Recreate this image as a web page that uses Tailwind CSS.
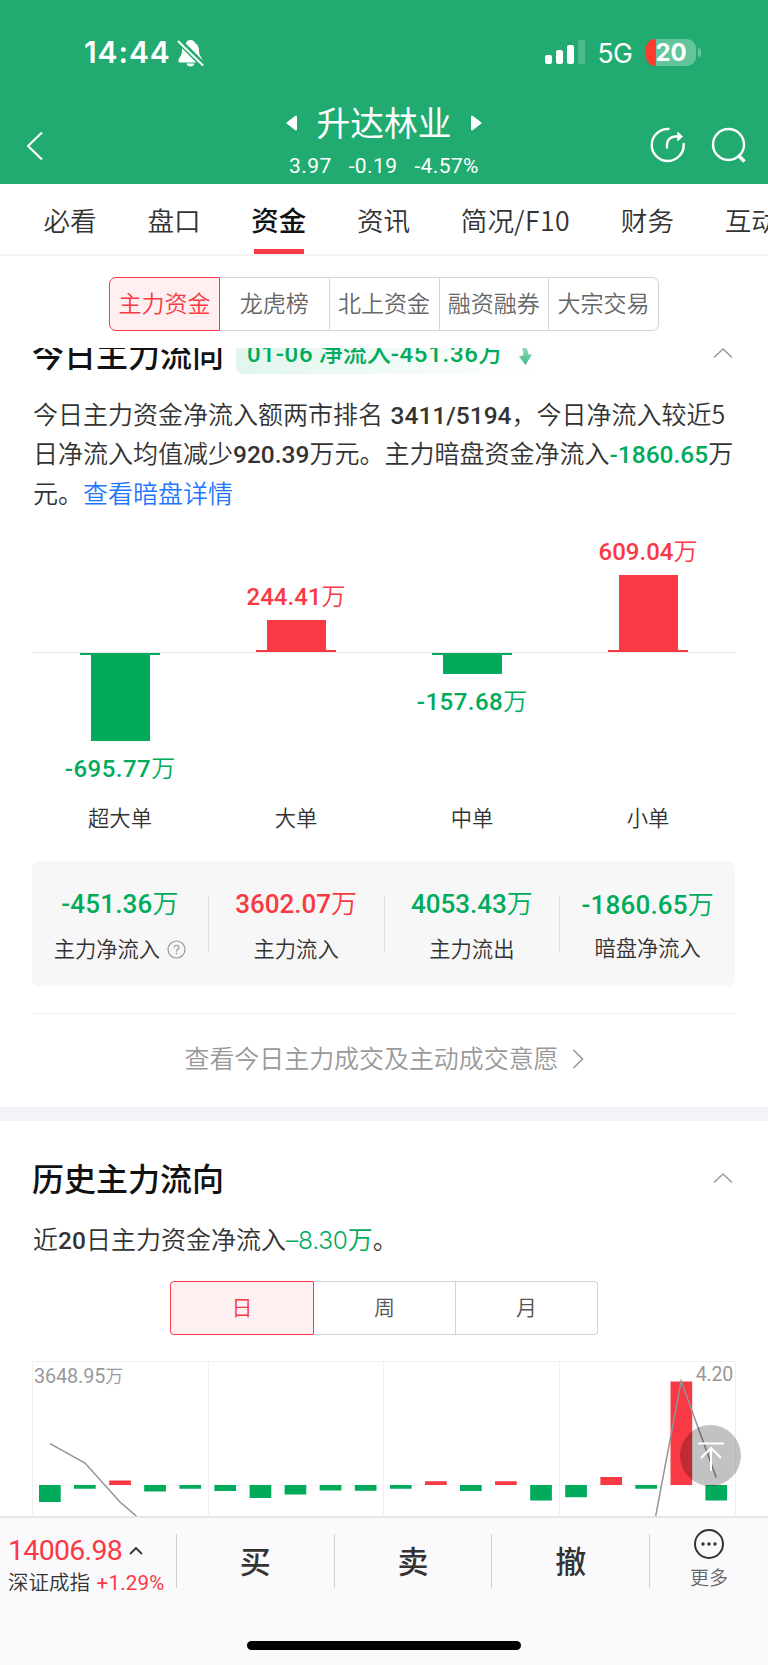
<!DOCTYPE html>
<html lang="zh-CN">
<head>
<meta charset="utf-8">
<title>升达林业</title>
<script src="https://cdn.jsdelivr.net/npm/@tailwindcss/browser@4"></script>
</head>
<body class="bg-white">
<div class="relative flex h-[1665px] w-[768px] flex-col overflow-hidden whitespace-nowrap bg-white font-['Noto_Sans_CJK_SC',sans-serif] text-[#333]">

  <!-- header -->
  <header class="flex h-[184px] shrink-0 flex-col bg-[#21ab70] text-white">
    <div class="flex h-[104px] items-center pl-[84px] pr-[67px]">
      <span class="font-['Inter',sans-serif] text-[30px] font-semibold leading-none tracking-[0.9px]">14:44</span>
      <svg class="ml-[6px] mt-[1px]" width="27" height="28" viewBox="0 0 27 28">
        <path d="M13.500 1c-2.300 0-4 1.200-4.500 3C6.200 5.500 5 8 5 11.500c0 6-3.500 7-3.500 10.500 0 1 .5 1.500 1.500 1.500h21c1 0 1.500-.5 1.500-1.500 0-3.500-3.500-4.500-3.500-10.500 0-3.500-1.200-6-4-7.500-.5-1.800-2.200-3-4.500-3zM9.500 24.500h8c-.4 1.800-1.900 3-4 3s-3.600-1.200-4-3z" fill="#fff"/>
        <path d="M1 1l26 26" stroke="#21ab70" stroke-width="6"/>
        <path d="M1.500 2.500l24 23.500" stroke="#fff" stroke-width="2" stroke-linecap="round"/>
      </svg>
      <div class="ml-auto flex items-end gap-1">
        <span class="h-[9.500px] w-[7px] rounded-[2px] bg-white"></span>
        <span class="h-[14px] w-[7px] rounded-[2px] bg-white"></span>
        <span class="h-[19px] w-[7px] rounded-[2px] bg-white"></span>
        <span class="h-[24.500px] w-[7px] rounded-[2px] bg-white/20"></span>
      </div>
      <span class="ml-[12px] mt-[2px] font-['Inter',sans-serif] text-[26.500px] leading-none tracking-[-0.4px]">5G</span>
      <div class="ml-[13px] flex h-[27px] w-[50.500px] items-center rounded-[9px] bg-linear-to-r from-[#ff3b30] from-[10px] to-[#64c49b] to-[10px] pl-[10px]">
        <span class="font-['Inter',sans-serif] text-[24px] font-bold leading-[27px]">20</span>
      </div>
      <span class="ml-[2px] h-[9px] w-[3px] rounded-r-full bg-white/30"></span>
    </div>
    <div class="flex h-[80px] items-center pl-[26px] pr-[22px]">
      <svg class="mt-[3px]" width="18" height="30" viewBox="0 0 18 30" fill="none" stroke="#fff" stroke-width="2.300"><path d="M16 1.500L2 15l14 13.500" stroke-linejoin="round"/></svg>
      <div class="ml-[243px] flex h-full w-[194px] flex-col items-center">
        <div class="flex h-[38px] items-center gap-[18px]">
          <svg width="12" height="16" viewBox="0 0 12 16"><path d="M10 1.500v13L1.500 8z" fill="#fff" stroke="#fff" stroke-width="2" stroke-linejoin="round"/></svg>
          <span class="mt-[-3px] text-[33.800px] leading-[38px]">升达林业</span>
          <svg width="12" height="16" viewBox="0 0 12 16"><path d="M2 1.500v13L10.500 8z" fill="#fff" stroke="#fff" stroke-width="2" stroke-linejoin="round"/></svg>
        </div>
        <div class="mt-[13px] flex gap-[17px] font-['Roboto',sans-serif] text-[21px] leading-[22px] tracking-[0.4px]"><span>3.97</span><span>-0.19</span><span>-4.57%</span></div>
      </div>
      <svg class="ml-auto mt-[2px]" width="36" height="36" viewBox="0 0 36 36" fill="none" stroke="#fff" stroke-width="2.400" stroke-linecap="round">
        <path d="M18.500 2A16 16 0 1 0 33.700 17"/><path d="M17 20.500V18q0-7.500 8-8.500h5"/><path d="M28 5.500l4.500 4-4.500 4z" fill="#fff" stroke-width="1" stroke-linejoin="round"/>
      </svg>
      <svg class="ml-[24px] mt-[2px]" width="36" height="36" viewBox="0 0 36 36" fill="none" stroke="#fff" stroke-width="2.400"><circle cx="18.500" cy="17.500" r="15.500"/><path d="M28 28l6.500 6.500" stroke-width="3.500"/></svg>
    </div>
  </header>

  <!-- page tabs -->
  <nav class="flex h-[72px] shrink-0 gap-[50.700px] border-b-2 border-[#f3f3f4] pl-[43.500px] text-[26.600px] font-[350] leading-[71px]">
    <span>必看</span><span>盘口</span>
    <span class="flex flex-col items-center text-[27.500px] font-medium text-[#111]"><span class="h-[65px]">资金</span><span class="h-[5px] w-[50px] bg-[#f93943]"></span></span>
    <span>资讯</span><span>简况<span class="tracking-[0.5px]">/F10</span></span><span>财务</span><span>互动</span>
  </nav>

  <!-- fund type switch -->
  <div class="flex h-[92px] shrink-0 justify-center pt-[21px] text-[23px] font-[350] leading-[49px] text-[#666]">
    <div class="flex h-[54px] w-[550px] text-center">
      <span class="w-[111px] rounded-l-[7px] border border-[#f93943] bg-[#ffeff0] text-[#f93943]">主力资金</span>
      <span class="w-[109.500px] border-y border-r border-[#d5d5d7]">龙虎榜</span>
      <span class="w-[110px] border-y border-r border-[#d5d5d7]">北上资金</span>
      <span class="w-[109.500px] border-y border-r border-[#d5d5d7]">融资融券</span>
      <span class="w-[110px] rounded-r-[7px] border-y border-r border-[#d5d5d7]">大宗交易</span>
    </div>
  </div>

  <main class="flex h-[1168px] shrink-0 flex-col overflow-hidden">
    <!-- today -->
    <section class="flex h-[759px] shrink-0 flex-col px-8">
      <div class="-mt-[18px] flex h-[46px] shrink-0 items-center">
        <h2 class="text-[32px] font-medium leading-[46px] text-[#111]">今日主力流向</h2>
        <div class="ml-[12px] flex h-[42px] w-[306px] items-center rounded-[7px] bg-linear-to-r from-[#e2f6ed] to-white pl-[11px] text-[24px] font-medium leading-[42px] text-[#00ab5b]"><span><span class="font-['Roboto',sans-serif] tracking-[0.7px]">01-06</span> 净流入<span class="font-['Roboto',sans-serif] tracking-[0.7px]">-451.36</span>万</span>
          <svg class="ml-[15px] mt-[6px]" width="15" height="20" viewBox="0 0 15 20"><defs><linearGradient id="dn" x1="0" y1="0" x2="0" y2="1"><stop offset="0" stop-color="#9fdcbf"/><stop offset="1" stop-color="#3dbd82"/></linearGradient></defs><path d="M3 0h4q3 3 3.500 8.500H14L7.500 19 1 10.500l4-1Q6 5 3 0z" fill="url(#dn)"/></svg>
        </div>
        <svg class="ml-auto mr-[3px]" width="20" height="12" viewBox="0 0 20 12" fill="none" stroke="#999" stroke-width="1.500"><path d="M1 10.500L10 2l9 8.500"/></svg>
      </div>
      <div class="mt-[18px] h-[120px] shrink-0 pl-px text-[25px] font-[350] leading-[38px]">
        <p class="h-[39.400px]">今日主力资金净流入额两市排名 <span class="ml-[2px] font-['Roboto',sans-serif] text-[24.500px] font-medium">3411/5194</span>，今日净流入较近5</p>
        <p class="h-[39.400px]">日净流入均值减少<span class="font-['Roboto',sans-serif] text-[24.500px] font-medium">920.39</span>万元。主力暗盘资金净流入<span class="font-['Roboto',sans-serif] text-[24.500px] font-medium text-[#00ab5b]">-1860.65</span>万</p>
        <p class="h-[39.400px]">元。<span class="text-[#1f77ff]">查看暗盘详情</span></p>
      </div>

      <!-- order size chart: upper half, axis, lower half, labels -->
      <div class="mt-[16px] grid h-[122px] shrink-0 grid-cols-4 items-end text-center text-[24px] font-[350] leading-[38px] text-[#f93943]">
        <span></span>
        <div class="flex flex-col items-center"><span class="h-[38px]"><span class="font-['Roboto',sans-serif] font-medium">244.41</span>万</span><i class="mt-[6px] h-[30px] w-[59px] bg-[#f93943]"></i><i class="h-[2px] w-[80px] bg-[#f93943]"></i></div>
        <span></span>
        <div class="flex flex-col items-center"><span class="h-[38px]"><span class="font-['Roboto',sans-serif] font-medium">609.04</span>万</span><i class="mt-[6px] h-[75px] w-[59px] bg-[#f93943]"></i><i class="h-[2px] w-[80px] bg-[#f93943]"></i></div>
      </div>
      <div class="h-px shrink-0 bg-[#ececee]"></div>
      <div class="grid h-[146px] shrink-0 grid-cols-4 items-start text-center text-[24px] font-[350] leading-[38px] text-[#00ab5b]">
        <div class="flex flex-col items-center"><i class="h-[2px] w-[80px] bg-[#00ab5b]"></i><i class="mb-[7px] h-[86px] w-[59px] bg-[#00ab5b]"></i><span><span class="font-['Roboto',sans-serif] font-medium tracking-[0.5px]">-695.77</span>万</span></div>
        <span></span>
        <div class="flex flex-col items-center"><i class="h-[2px] w-[80px] bg-[#00ab5b]"></i><i class="mb-[7px] h-[19px] w-[59px] bg-[#00ab5b]"></i><span><span class="font-['Roboto',sans-serif] font-medium tracking-[0.5px]">-157.68</span>万</span></div>
        <span></span>
      </div>
      <div class="grid h-[62px] shrink-0 grid-cols-4 text-center text-[21.300px] font-[350] leading-[35px]"><span>超大单</span><span>大单</span><span>中单</span><span>小单</span></div>

      <!-- totals -->
      <div class="grid h-[125px] w-[703px] shrink-0 grid-cols-4 rounded-[7px] bg-[#f7f7f8] text-center text-[26px] font-[350] leading-[38px] text-[#00ab5b]">
        <div class="flex flex-col items-center pt-[22px]"><span class="h-[40px]"><span class="font-['Roboto',sans-serif] font-medium tracking-[0.2px]">-451.36</span>万</span>
          <span class="mt-[6px] flex h-[38px] items-center gap-[7px] text-[21.300px] leading-[36px] text-[#333]">主力净流入<svg class="mt-[2px]" width="19" height="19" viewBox="0 0 19 19" fill="none" stroke="#999" stroke-width="1.200"><circle cx="9.500" cy="9.500" r="8.500"/><path d="M7.200 7.600c0-3.200 4.800-3 4.800 0 0 1.700-2.500 1.800-2.500 3.800M9.500 12.800v1.500"/></svg></span></div>
        <div class="mt-[34px] flex h-[57px] flex-col items-center border-l border-[#dedee0]"><span class="-mt-[12px] h-[40px] shrink-0 text-[#f93943]"><span class="font-['Roboto',sans-serif] font-medium">3602.07</span>万</span><span class="mt-[6px] text-[21.300px] text-[#333]">主力流入</span></div>
        <div class="mt-[34px] flex h-[57px] flex-col items-center border-l border-[#dedee0]"><span class="-mt-[12px] h-[40px] shrink-0"><span class="font-['Roboto',sans-serif] font-medium">4053.43</span>万</span><span class="mt-[6px] text-[21.300px] text-[#333]">主力流出</span></div>
        <div class="mt-[34px] flex h-[57px] flex-col items-center border-l border-[#dedee0]"><span class="-mt-[11px] h-[40px] shrink-0"><span class="font-['Roboto',sans-serif] font-medium tracking-[0.2px]">-1860.65</span>万</span><span class="mt-[4px] text-[21.300px] text-[#333]">暗盘净流入</span></div>
      </div>
      <div class="mt-[27px] h-px shrink-0 bg-[#f0f0f1]"></div>
      <div class="flex h-[90px] items-center justify-center gap-[13px] text-[24.950px] font-[350] leading-[86px] text-[#999]"><span class="-mt-[4px]">查看今日主力成交及主动成交意愿</span><svg width="12" height="20" viewBox="0 0 12 20" fill="none" stroke="#999" stroke-width="1.600"><path d="M1.500 1L10.500 10l-9 9"/></svg></div>
    </section>
    <div class="h-[14px] shrink-0 bg-[#f2f4f8]"></div>

    <!-- history -->
    <section class="flex flex-col px-8">
      <div class="flex h-[113px] shrink-0 items-center">
        <h2 class="-mt-[2px] text-[32px] font-medium leading-[46px] text-[#111]">历史主力流向</h2>
        <svg class="ml-auto mr-[3px]" width="20" height="12" viewBox="0 0 20 12" fill="none" stroke="#999" stroke-width="1.500"><path d="M1 10.500L10 2l9 8.500"/></svg>
      </div>
      <p class="-mt-[14px] h-[61px] shrink-0 pl-px text-[25px] font-[350] leading-[36px]">近<span class="font-['Roboto',sans-serif] text-[24.500px] font-medium">20</span>日主力资金净流入<span class="text-[#00ab5b]"><span class="font-['Inter',sans-serif] text-[24.500px] tracking-[-0.2px]">–8.30</span>万</span>。</p>
      <div class="mx-auto flex h-[54px] w-[428px] shrink-0 text-center text-[21px] font-[350] leading-[49px] text-[#555]">
        <span class="w-[144px] rounded-l-[4px] border border-[#f93943] bg-[#fff1f2] text-[#f93943]">日</span>
        <span class="w-[142px] border-y border-r border-[#d5d5d7]">周</span>
        <span class="w-[142px] rounded-r-[4px] border-y border-r border-[#d5d5d7]">月</span>
      </div>
      <div class="relative mt-[26px] h-[156px] w-[704px] shrink-0">
        <svg class="absolute inset-0" width="704" height="156" viewBox="32 1361 704 156">
          <g fill="none" stroke="#f0f0f1"><path d="M32.500 1517V1361.500H735.500V1517M208.500 1361V1517M383.500 1361V1517M559.500 1361V1517"/><path d="M33 1485H735" stroke-dasharray="4 2"/></g>
          <g fill="#00ab5b">
            <path d="M39 1485h21.700v17H39zM74 1485h21.700v3.700H74zM144.200 1485h21.700v6.500h-21.700zM179.400 1485h21.700v3.700h-21.700zM214.400 1485h21.700v6h-21.700zM249.600 1485h21.700v13h-21.700zM284.600 1485h21.700v9.500h-21.700zM319.700 1485h21.700v5.500h-21.700zM354.800 1485h21.700v5.700h-21.700zM389.900 1485h21.700v3.700h-21.700zM460 1485h21.700v6h-21.700zM530.200 1485h21.700v15.500h-21.700zM565.200 1485h21.700v12.200h-21.700zM635.300 1485H657v3.700h-21.700zM705.400 1485h21.700v15.500h-21.700z"/>
          </g>
          <path fill="#f93943" d="M109.200 1480.600h21.700v4.400h-21.700zM425 1481.200h21.700v3.800H425zM495 1481.200h21.700v3.800H495zM600.400 1477h21.700v8h-21.700zM670.500 1381.500h21.700V1485h-21.700z"/>
          <path d="M50 1443.700L85 1463l35 39 18 15.500M655.500 1517L681.200 1381l35 96.500" fill="none" stroke="#949494" stroke-width="1.500"/>
        </svg>
        <div class="relative flex justify-between pl-[2px] pr-[3px] text-[18px] font-[350] leading-[28px] text-[#999]"><span><span class="font-['Roboto',sans-serif] text-[19.800px] font-normal tracking-[-0.1px]">3648.95</span>万</span><span class="font-['Roboto',sans-serif] text-[19.500px] font-normal tracking-[-0.2px]">4.20</span></div>
        <div class="absolute left-[648px] top-[64px] flex size-[61px] items-center justify-center rounded-full bg-black/24">
          <svg width="28" height="32" viewBox="0 0 28 32" fill="none" stroke="#fff" stroke-width="2"><path d="M1 3.500h26M14 31V8M4 18L14 8l10 10"/></svg>
        </div>
      </div>
    </section>
  </main>

  <!-- trade bar -->
  <footer class="flex h-[149px] shrink-0 flex-col border-t-2 border-[#e6e6e8] bg-[#fafafc]">
    <div class="flex h-[86px] items-center">
      <div class="h-full w-[176px] pl-[8px] pt-[15px]">
        <div class="flex items-center"><span class="font-['Roboto',sans-serif] text-[28.500px] leading-[36px] tracking-[-0.700px] text-[#f93943]">14006.98</span><svg class="-mt-px ml-[7px]" width="14" height="9" viewBox="0 0 14 9" fill="none" stroke="#333" stroke-width="1.800"><path d="M1 8l6-6 6 6"/></svg></div>
        <div class="-mt-[2px] text-[20.500px] font-[350] leading-[28px]">深证成指 <span class="ml-[2px] font-['Roboto',sans-serif] text-[20.500px] font-normal tracking-[0.2px] text-[#f93943]">+1.29%</span></div>
      </div>
      <div class="grid h-[54px] w-[474px] grid-cols-3 border-r border-[#cfcfd2] text-center text-[31px] font-medium leading-[51px]"><span class="border-l border-[#cfcfd2]">买</span><span class="border-l border-[#cfcfd2]">卖</span><span class="border-l border-[#cfcfd2]">撤</span></div>
      <div class="flex h-full flex-1 flex-col items-center pt-[10px]">
        <svg width="32" height="32" viewBox="0 0 32 32"><circle cx="16" cy="16" r="14" fill="none" stroke="#333" stroke-width="2"/><g fill="#333"><circle cx="10" cy="16" r="1.700"/><circle cx="16" cy="16" r="1.700"/><circle cx="22" cy="16" r="1.700"/></g></svg>
        <span class="mt-[3px] text-[19px] font-[350] leading-[28px] text-[#666]">更多</span>
      </div>
    </div>
    <div class="mx-auto mt-[37px] h-[9px] w-[274px] rounded-full bg-black"></div>
  </footer>
</div>
</body>
</html>
